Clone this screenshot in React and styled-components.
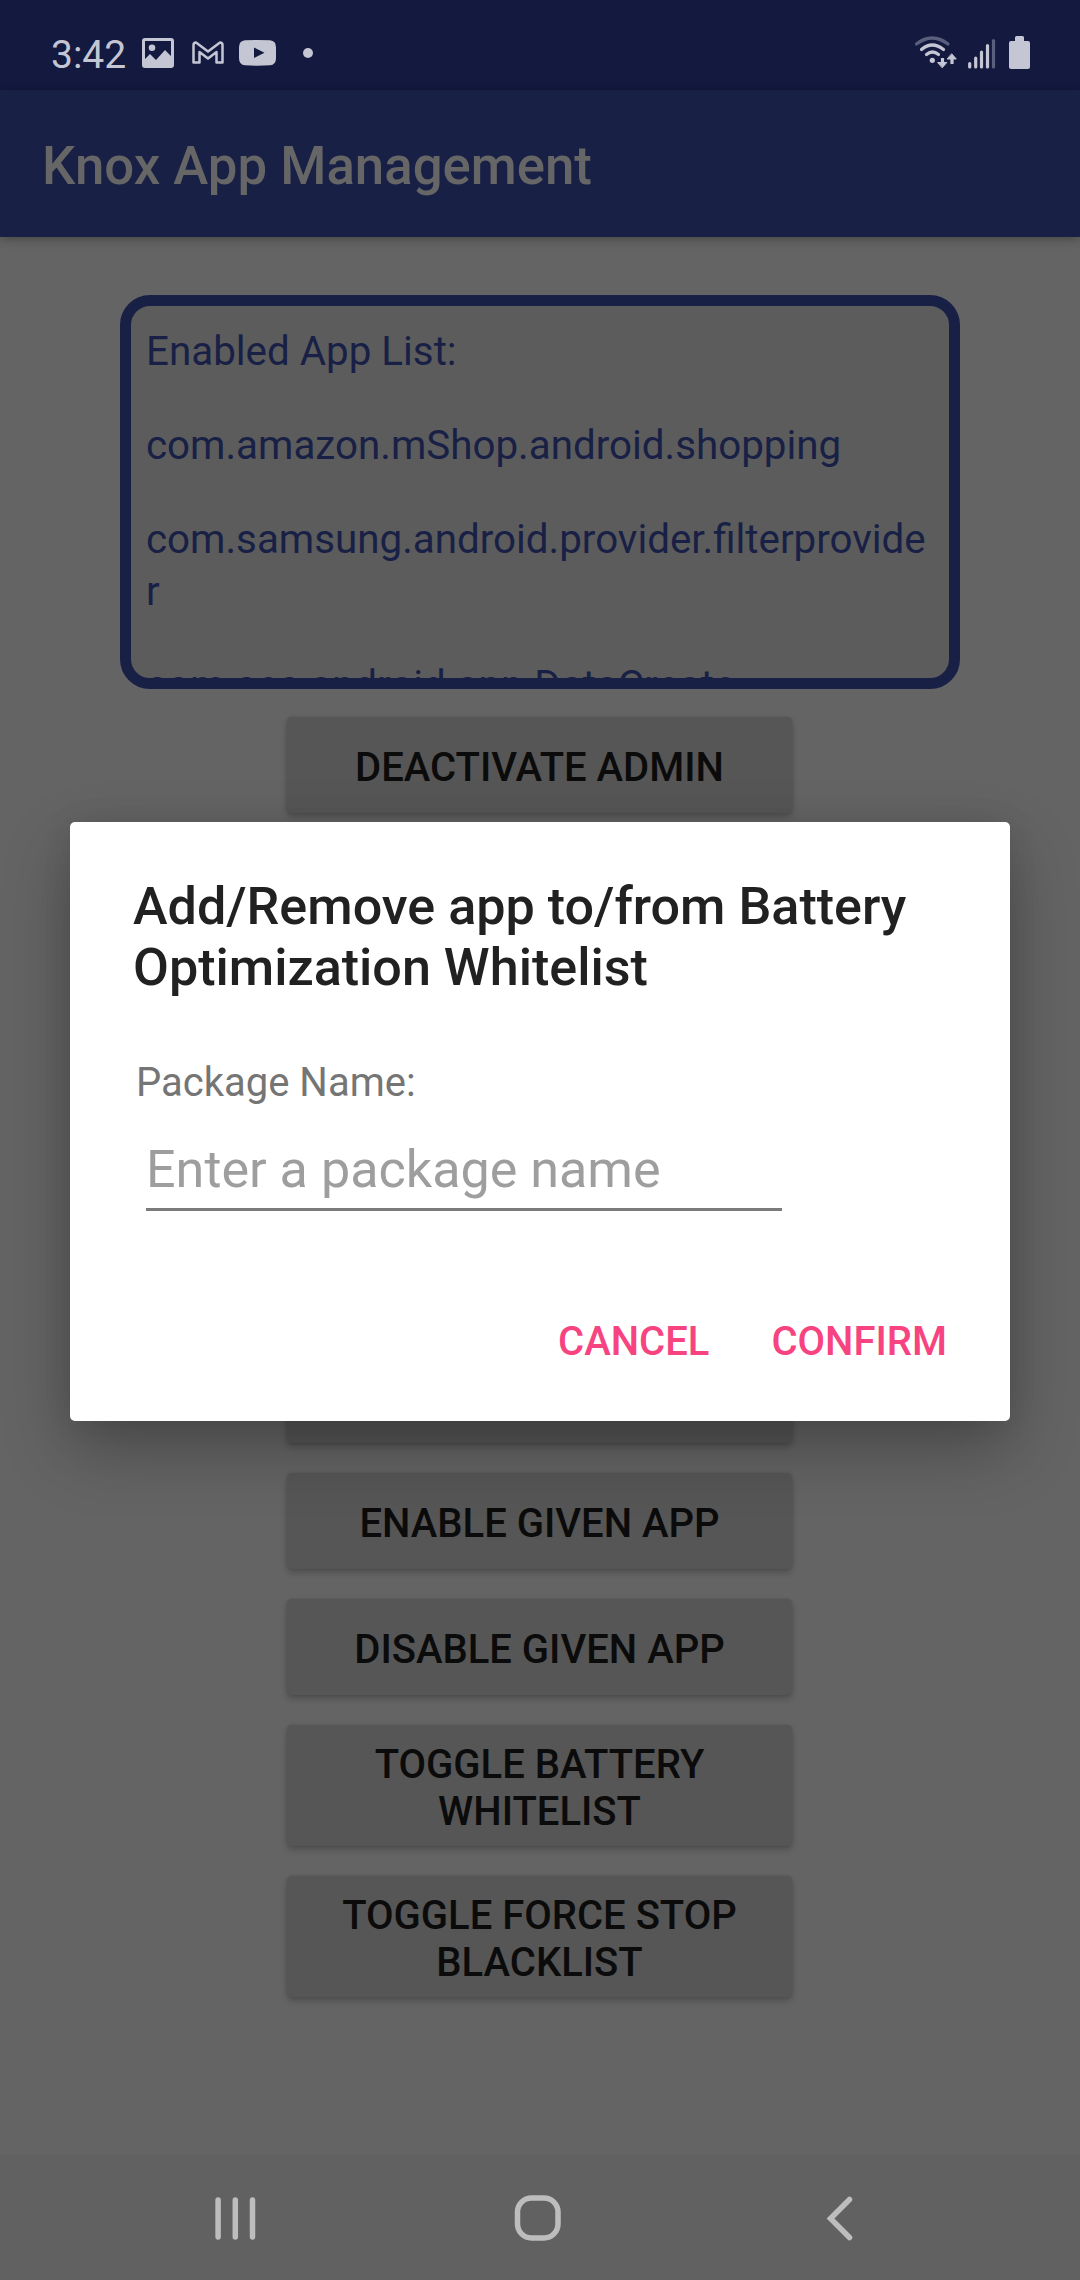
import React from "react";
import styled, { createGlobalStyle } from "styled-components";

const Global = createGlobalStyle`
  * { box-sizing: border-box; }
  body { margin: 0; background: #646464; font-family: Roboto, "Liberation Sans", sans-serif; }
`;
const Screen = styled.div`
  position: relative;
  width: 1080px;
  height: 2280px;
  overflow: hidden;
  display: flex;
  flex-direction: column;
  background: #646464;
`;
const StatusBar = styled.header`
  height: 90px;
  flex: none;
  display: flex;
  align-items: flex-start;
  justify-content: space-between;
  padding: 0 48px 0 51px;
  background: #13193f;
  color: #c5c6d3;
`;
const Clock = styled.span`
  font-size: 39px;
  line-height: 47px;
  width: 84px;
  padding-top: 32px;
`;
const StatusGroup = styled.div`
  display: flex;
`;
const Toolbar = styled.div`
  height: 147px;
  flex: none;
  display: flex;
  align-items: center;
  padding: 5px 42px 0;
  background: #192046;
  box-shadow: 0 2px 10px rgba(0, 0, 0, 0.3);
`;
const ToolbarTitle = styled.h1`
  margin: 0;
  font-size: 52.75px;
  font-weight: 500;
  line-height: 62px;
  color: #666;
  white-space: nowrap;
`;
const Content = styled.main`
  flex: 1;
  display: flex;
  flex-direction: column;
  align-items: center;
  padding-top: 58px;
`;
const AppList = styled.section`
  width: 840px;
  height: 394px;
  flex: none;
  overflow: hidden;
  border: 11px solid #192046;
  border-radius: 30px;
  background: #5c5c5c;
  padding: 20px 15px 0;
`;
const PackageLine = styled.p`
  margin: 0 0 42px;
  font-size: 40.35px;
  line-height: 52px;
  color: #192046;
  white-space: pre;
`;
const ButtonColumn = styled.div`
  display: flex;
  flex-direction: column;
  gap: 30px;
  width: 505px;
  margin-right: 1px;
  padding-top: 28px;
`;
const ActionButton = styled.button`
  width: 100%;
  height: ${(p) => (p.$tall ? 121 : 96)}px;
  border: 0;
  border-radius: 5px;
  padding: 5px 0 0;
  background: #565656;
  color: #0b0b0b;
  font: 500 40px/47px Roboto, "Liberation Sans", sans-serif;
  text-transform: uppercase;
  white-space: pre-line;
  box-shadow: 0 4px 6px rgba(0, 0, 0, 0.2), 0 0 3px rgba(0, 0, 0, 0.12);
`;
const NavBar = styled.nav`
  height: 126px;
  flex: none;
  background: #616161;
  display: flex;
`;
const DialogLayer = styled.div`
  position: absolute;
  inset: 0;
  padding: 822px 70px 0;
`;
const Dialog = styled.div`
  height: 599px;
  border-radius: 5px;
  background: #fff;
  padding: 54px 63px 0;
  display: flex;
  flex-direction: column;
  box-shadow: 0 28px 66px rgba(0, 0, 0, 0.28), 0 0 30px rgba(0, 0, 0, 0.08);
`;
const DialogTitle = styled.h2`
  margin: 0;
  font-size: 52.1px;
  line-height: 61px;
  font-weight: 500;
  color: #212121;
  white-space: nowrap;
`;
const FieldLabel = styled.label`
  margin: 61px 0 0 3px;
  font-size: 40px;
  line-height: 47px;
  color: #757575;
`;
const Field = styled.input`
  margin: 22px 0 0 13px;
  width: 636px;
  height: 83px;
  border: 0;
  border-bottom: 3px solid #7b7b7b;
  border-radius: 0;
  padding: 2px 0 0;
  outline: 0;
  background: transparent;
  font: 400 52.1px/62px Roboto, "Liberation Sans", sans-serif;
  &::placeholder { color: #9e9e9e; opacity: 1; }
`;
const DialogActions = styled.div`
  display: flex;
  justify-content: flex-end;
  gap: 62px;
  margin-top: 107px;
`;
const TextButton = styled.button`
  border: 0;
  padding: 0;
  background: none;
  color: #f74380;
  font: 500 40px/47px Roboto, "Liberation Sans", sans-serif;
`;

const packages = [
  "Enabled App List:",
  "com.amazon.mShop.android.shopping",
  "com.samsung.android.provider.filterprovide\nr",
  "com.sec.android.app.DataCreate",
];
const actions = [
  { label: "Deactivate Admin" },
  {}, {}, {}, {}, {},
  { label: "Enable Given App" },
  { label: "Disable Given App" },
  { label: "Toggle Battery\nWhitelist", tall: true },
  { label: "Toggle Force Stop\nBlacklist", tall: true },
];

const NotificationIcons = () => (
  <svg width="190" height="90" viewBox="135 0 190 90" fill="#c5c6d3">
    <path fillRule="evenodd" d="M145 38h26a3 3 0 0 1 3 3v24a3 3 0 0 1-3 3h-26a3 3 0 0 1-3-3V41a3 3 0 0 1 3-3zm0 3v18l5-5 6 6 9-10 6 6V41z" />
    <circle cx="152" cy="47.700" r="3.300" />
    <path d="M196 42.500L208 51.500l12-9q2.500 0 2.500 2.500v17.500h-6V52L208 58.500 199.500 52v10.500h-6V45q0-2.500 2.500-2.500z" fill="none" stroke="#c5c6d3" strokeWidth="2.500" strokeLinejoin="round" />
    <path fillRule="evenodd" d="M245 40.300q12.500-.8 25 0 6 .5 6 7v11q0 6.500-6 7-12.500.8-25 0-6-.5-6-7v-11q0-6.500 6-7zM254 47.500v10.500l10.500-5.200z" />
    <circle cx="308" cy="53" r="5" />
  </svg>
);
const SystemIcons = () => (
  <svg width="120" height="90" viewBox="912 0 120 90" fill="none" stroke="#c5c6d3" strokeWidth="3.200" strokeLinecap="round">
    <path d="M916.500 44q15.500-12 31.500 0" stroke="#5b5f7e" />
    <path d="M921.500 49.500q10.500-9 22 0M926.500 54.500q6-5 12 0" />
    <circle cx="932.300" cy="60.300" r="2.600" fill="#c5c6d3" stroke="none" />
    <path d="M942.500 58v6M952 64v-5" strokeLinecap="butt" />
    <path d="M938 62.500h8.800l-4.400 5zM947.500 59h8.800l-4.400-5z" fill="#c5c6d3" strokeWidth="1" strokeLinejoin="round" />
    <path d="M969.700 63.500v3.500M975.700 58v9M981.500 52v15M987.500 45.500V67" />
    <path d="M993.500 40.500V67" stroke="#5b5f7e" />
    <path d="M1015 37.500a1.500 1.500 0 0 1 1.500-1.500h6a1.500 1.500 0 0 1 1.500 1.500V41h4a2 2 0 0 1 2 2v24a2 2 0 0 1-2 2h-17a2 2 0 0 1-2-2V43a2 2 0 0 1 2-2h4z" fill="#c5c6d3" stroke="none" />
  </svg>
);
const NavIcons = () => (
  <svg width="1080" height="126" viewBox="0 2154 1080 126" fill="none" stroke="#bdbdbd" strokeWidth="5.500" strokeLinecap="round">
    <path d="M218.100 2200v37M235.300 2200v37M252.500 2200v37" />
    <rect x="517.500" y="2198" width="40.500" height="40" rx="14" />
    <path d="M849.500 2199.500l-19 19 19 19" />
  </svg>
);

export default function App() {
  return (
    <Screen>
      <Global />
      <StatusBar>
        <StatusGroup><Clock>3:42</Clock><NotificationIcons /></StatusGroup>
        <SystemIcons />
      </StatusBar>
      <Toolbar><ToolbarTitle>Knox App Management</ToolbarTitle></Toolbar>
      <Content>
        <AppList>{packages.map((p) => <PackageLine key={p}>{p}</PackageLine>)}</AppList>
        <ButtonColumn>
          {actions.map((a, i) => <ActionButton key={i} $tall={a.tall}>{a.label}</ActionButton>)}
        </ButtonColumn>
      </Content>
      <NavBar><NavIcons /></NavBar>
      <DialogLayer>
        <Dialog role="dialog">
          <DialogTitle>Add/Remove app to/from Battery<br />Optimization Whitelist</DialogTitle>
          <FieldLabel htmlFor="package-name">Package Name:</FieldLabel>
          <Field id="package-name" placeholder="Enter a package name" />
          <DialogActions>
            <TextButton>CANCEL</TextButton>
            <TextButton>CONFIRM</TextButton>
          </DialogActions>
        </Dialog>
      </DialogLayer>
    </Screen>
  );
}
